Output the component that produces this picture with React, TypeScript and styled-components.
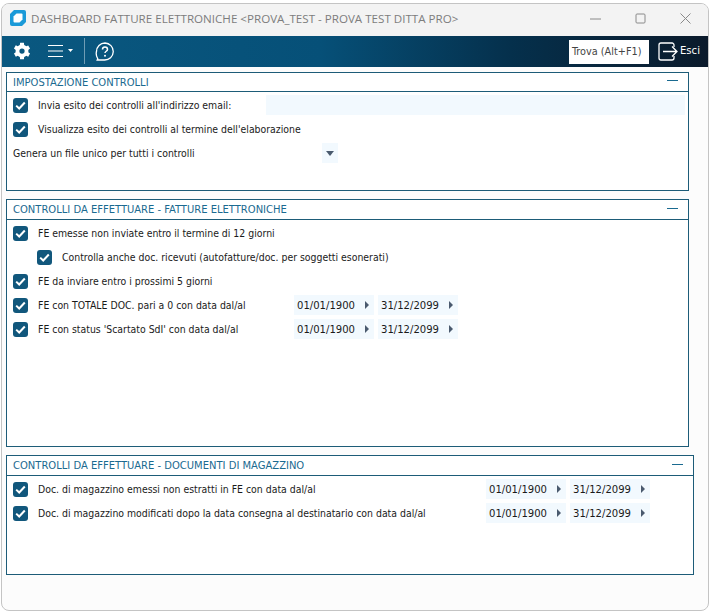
import styled, { createGlobalStyle } from 'styled-components'

const GlobalStyle = createGlobalStyle`
  html, body {
    margin: 0;
    padding: 0;
    background: #fff;
  }
`

const Window = styled.div`
  width: 708px;
  height: 608px;
  margin: 3px 0 0 1px;
  display: flex;
  flex-direction: column;
  overflow: hidden;
  box-sizing: border-box;
  background: #fcfcfc;
  border: 1px solid #c4c4c4;
  border-radius: 8px;
  font-family: 'DejaVu Sans', Tahoma, sans-serif;
  font-stretch: condensed;
  font-size: 10.4px;
  color: #1a1a1a;
`

const TitleBar = styled.div`
  height: 32px;
  flex: none;
  box-sizing: border-box;
  display: flex;
  align-items: center;
  padding: 0 0 4px 8px;
  gap: 5px;
  background: #f3f3f3;
`

const TitleText = styled.span`
  font-family: 'Open Sans', 'Noto Sans', sans-serif;
  font-stretch: normal;
  font-size: 11.6px;
  color: #7d7d7d;
  white-space: nowrap;
`

const WindowButtons = styled.div`
  margin-left: auto;
  display: flex;
  align-items: center;
  gap: 34px;
  padding-right: 17px;
`

const Toolbar = styled.div`
  height: 31px;
  flex: none;
  display: flex;
  align-items: center;
  padding-left: 11px;
  background: linear-gradient(90deg, #0a5880 0%, #065078 45%, #05304c 72%, #0b1a2b 100%);
  color: #fff;
`

const GearIcon = styled.svg`
  margin-top: -2px;
`

const MenuIcon = styled.svg`
  margin: -1px 0 0 17px;
`

const ToolDivider = styled.div`
  width: 1px;
  height: 26px;
  margin: -1px 10px 0 9px;
  background: #6f9db5;
`

const SearchBox = styled.div`
  margin-left: auto;
  width: 80px;
  height: 24px;
  box-sizing: border-box;
  padding-left: 3px;
  display: flex;
  align-items: center;
  background: #fff;
  color: #444;
  font-size: 10.8px;
  white-space: nowrap;
`

const ExitIcon = styled.svg`
  margin-left: 9px;
`

const ExitLabel = styled.span`
  width: 28px;
  margin: -3px 0 0 2px;
  font-size: 11.2px;
`

const Content = styled.div`
  flex: 1;
  display: flex;
  flex-direction: column;
  gap: 8px;
  padding: 5px 19px 0 4px;
`

const Panel = styled.section<{ $height: number; $extra?: number }>`
  height: ${(p) => p.$height}px;
  margin-right: ${(p) => (p.$extra ? -p.$extra : 0)}px;
  flex: none;
  box-sizing: border-box;
  background: #fff;
  border: 1px solid #1d5c78;
`

const PanelHeader = styled.header<{ $height?: number }>`
  height: ${(p) => p.$height ?? 19}px;
  box-sizing: border-box;
  display: flex;
  align-items: center;
  justify-content: space-between;
  padding: 0 10px 0 6px;
  border-bottom: 1px solid #1d5c78;
  color: #1a6a90;
  font-size: 11.1px;
  background: #fff;
`

const Collapse = styled.span`
  width: 11px;
  height: 1px;
  margin-top: -3px;
  background: #1a6a90;
`

const PanelBody = styled.div`
  padding: 1px 3px 0 6px;
  display: flex;
  flex-direction: column;
`

const Row = styled.div<{ $indent?: boolean; $height?: number }>`
  height: ${(p) => p.$height ?? 24}px;
  display: flex;
  align-items: center;
  padding-left: ${(p) => (p.$indent ? 24 : 0)}px;
  white-space: nowrap;
`

const Box = styled.span`
  width: 15px;
  height: 15px;
  flex: none;
  margin-right: 10px;
  display: flex;
  align-items: center;
  justify-content: center;
  border-radius: 3px;
  background: #11577c;
`

const Label = styled.span<{ $width?: number }>`
  ${(p) => (p.$width ? `width: ${p.$width}px; flex: none;` : '')}
`

const EmailInput = styled.div`
  flex: 1;
  height: 20px;
  background: #f2f9fe;
`

const Caret = styled.span`
  width: 16px;
  height: 20px;
  margin-left: auto;
  display: flex;
  align-items: center;
  justify-content: center;
  background: #f2f9fe;
`

const SelectRow = styled(Row)`
  width: 325px;
`

const DateField = styled.div`
  width: 80px;
  height: 20px;
  box-sizing: border-box;
  padding: 0 4px 0 3px;
  margin-right: 4px;
  display: flex;
  align-items: center;
  justify-content: space-between;
  background: #f2f9fe;
  font-size: 11.2px;
`

const Arrow = () => (
  <svg width="6" height="8" viewBox="0 0 6 8">
    <path d="M1 0l4 4-4 4z" fill="#4a5a6e" />
  </svg>
)

const Check = () => (
  <svg width="11" height="9" viewBox="0 0 11 9">
    <path d="M1.2 4.6l3 2.9 5.6-6" fill="none" stroke="#fff" strokeWidth="2" />
  </svg>
)

const CheckRow = ({
  children,
  indent,
  width,
  dates,
}: {
  children: string
  indent?: boolean
  width?: number
  dates?: boolean
}) => (
  <Row $indent={indent}>
    <Box>
      <Check />
    </Box>
    <Label $width={width}>{children}</Label>
    {dates && (
      <>
        <DateField>
          01/01/1900
          <Arrow />
        </DateField>
        <DateField>
          31/12/2099
          <Arrow />
        </DateField>
      </>
    )}
  </Row>
)

export default function App() {
  return (
    <>
      <GlobalStyle />
      <Window>
        <TitleBar>
          <svg width="16" height="16" viewBox="0 0 16 16">
            <path d="M4 0h10a2 2 0 012 2v10l-4 4H2a2 2 0 01-2-2V4z" fill="#1b9ad8" />
            <path d="M6.500 3.500h5a1 1 0 011 1v5l-3 3h-5a1 1 0 01-1-1v-5z" fill="#fff" />
          </svg>
          <TitleText>DASHBOARD FATTURE ELETTRONICHE &lt;PROVA_TEST - PROVA TEST DITTA PRO&gt;</TitleText>
          <WindowButtons>
            <svg width="11" height="11" viewBox="0 0 11 11">
              <path d="M0 6h11" stroke="#8a8a8a" />
            </svg>
            <svg width="11" height="11" viewBox="0 0 11 11">
              <rect x="1" y="1" width="9" height="9" rx="1" fill="none" stroke="#8a8a8a" />
            </svg>
            <svg width="11" height="11" viewBox="0 0 11 11">
              <path d="M.5.5l10 10M10.5.5l-10 10" stroke="#8a8a8a" />
            </svg>
          </WindowButtons>
        </TitleBar>
        <Toolbar>
          <GearIcon width="18" height="18" viewBox="0 0 24 24">
            <path
              fill="#fff"
              d="M20.400 13.500a7.600 7.600 0 000-3l2.300-1.800-2.400-4.200-2.800 1.100a7.600 7.600 0 00-2.600-1.500L14.500 1h-5l-.4 3a7.600 7.600 0 00-2.600 1.500L3.700 4.400 1.300 8.700l2.300 1.800a7.600 7.600 0 000 3l-2.300 1.800 2.400 4.200 2.800-1.100a7.600 7.600 0 002.600 1.500l.4 3.100h5l.4-3.100a7.600 7.600 0 002.600-1.500l2.800 1.100 2.400-4.200zM12 15.500a3.500 3.500 0 110-7 3.500 3.500 0 010 7z"
            />
          </GearIcon>
          <MenuIcon width="27" height="14" viewBox="0 0 27 14">
            <path d="M0 1.500h15M0 7h15M0 12.500h15" stroke="#fff" strokeWidth="1.200" />
            <path d="M20 5h5l-2.500 3z" fill="#fff" />
          </MenuIcon>
          <ToolDivider />
          <svg width="20" height="20" viewBox="0 0 20 20">
            <path
              d="M10 1a8.500 8.500 0 11-.5 17H2.200l.6-1.200A9 9 0 011.500 9.500 8.500 8.500 0 0110 1z"
              fill="none"
              stroke="#fff"
              strokeWidth="1.300"
            />
            <path d="M7.500 7.500a2.500 2.500 0 115 0c0 1.700-2.500 1.800-2.500 3.500" fill="none" stroke="#fff" strokeWidth="1.500" />
            <circle cx="10" cy="13.800" r="1" fill="#fff" />
          </svg>
          <SearchBox>Trova (Alt+F1)</SearchBox>
          <ExitIcon width="20" height="19" viewBox="0 0 20 19">
            <path d="M16 5V3a2 2 0 00-2-2H3a2 2 0 00-2 2v13a2 2 0 002 2h11a2 2 0 002-2v-2" fill="none" stroke="#fff" strokeWidth="1.300" />
            <path d="M5 9.500h14M14 4.500l5 5-5 5" fill="none" stroke="#fff" strokeWidth="1.300" />
          </ExitIcon>
          <ExitLabel>Esci</ExitLabel>
        </Toolbar>
        <Content>
          <Panel $height={119}>
            <PanelHeader>
              IMPOSTAZIONE CONTROLLI
              <Collapse />
            </PanelHeader>
            <PanelBody>
              <Row>
                <Box>
                  <Check />
                </Box>
                <Label $width={228}>Invia esito dei controlli all'indirizzo email:</Label>
                <EmailInput />
              </Row>
              <CheckRow>Visualizza esito dei controlli al termine dell'elaborazione</CheckRow>
              <SelectRow>
                Genera un file unico per tutti i controlli
                <Caret>
                  <svg width="8" height="5" viewBox="0 0 8 5">
                    <path d="M0 0h8L4 5z" fill="#4a5a6e" />
                  </svg>
                </Caret>
              </SelectRow>
            </PanelBody>
          </Panel>
          <Panel $height={248}>
            <PanelHeader $height={20}>
              CONTROLLI DA EFFETTUARE - FATTURE ELETTRONICHE
              <Collapse />
            </PanelHeader>
            <PanelBody>
              <CheckRow>FE emesse non inviate entro il termine di 12 giorni</CheckRow>
              <CheckRow indent>Controlla anche doc. ricevuti (autofatture/doc. per soggetti esonerati)</CheckRow>
              <CheckRow>FE da inviare entro i prossimi 5 giorni</CheckRow>
              <CheckRow width={256} dates>FE con TOTALE DOC. pari a 0 con data dal/al</CheckRow>
              <CheckRow width={256} dates>FE con status 'Scartato SdI' con data dal/al</CheckRow>
            </PanelBody>
          </Panel>
          <Panel $height={120} $extra={5}>
            <PanelHeader $height={20}>
              CONTROLLI DA EFFETTUARE - DOCUMENTI DI MAGAZZINO
              <Collapse />
            </PanelHeader>
            <PanelBody>
              <CheckRow width={448} dates>Doc. di magazzino emessi non estratti in FE con data dal/al</CheckRow>
              <CheckRow width={448} dates>Doc. di magazzino modificati dopo la data consegna al destinatario con data dal/al</CheckRow>
            </PanelBody>
          </Panel>
        </Content>
      </Window>
    </>
  )
}
